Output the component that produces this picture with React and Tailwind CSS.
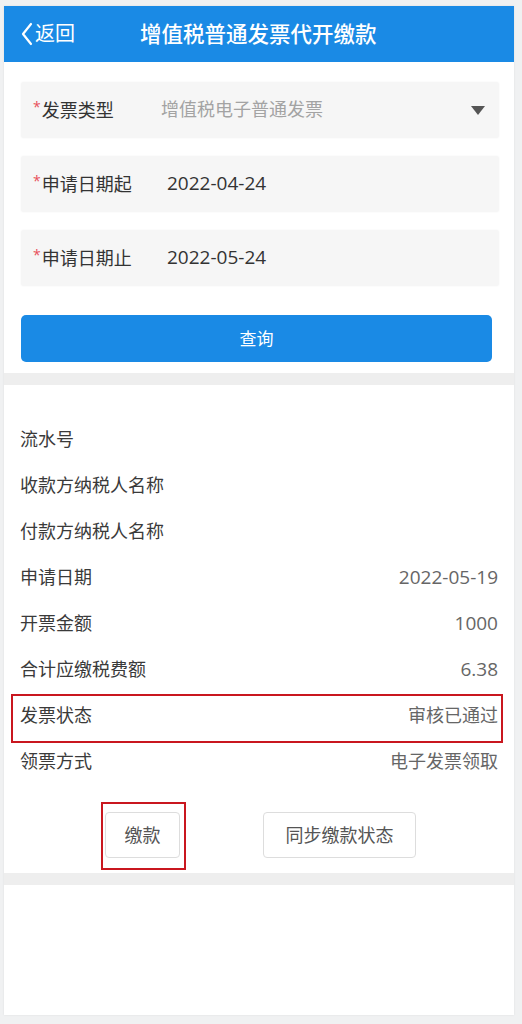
import React from "react";

const FONT = { fontFamily: '"Open Sans", "Noto Sans CJK SC", sans-serif' };

function Field({ label, children, right }) {
  return (
    <div className="flex h-[56px] items-center rounded-[3px] bg-[#f6f6f6] pl-[12px] pr-[12px] shadow-[0_0_2px_rgba(0,0,0,0.06)]">
      <div className="flex w-[120px] items-start">
        <span className="mr-[1px] mt-[-1px] text-[14px] leading-none text-[#e8505b]">*</span>
        <span className="text-[18px] leading-none text-[#333]">{label}</span>
      </div>
      <div className="flex-1">{children}</div>
      {right}
    </div>
  );
}

function Row({ label, value, boxed, num }) {
  return (
    <div className="relative flex h-[46px] items-center justify-between px-4">
      <span className="text-[18px] leading-none text-[#3a3a3a]">{label}</span>
      <span className={num ? "text-[19px] leading-none text-[#666]" : "text-[18px] leading-none text-[#666]"}>{value}</span>
      {boxed && (
        <div className="pointer-events-none absolute left-[7px] right-[11px] top-[2px] bottom-[-5px] border-2 border-[#c9171f]" />
      )}
    </div>
  );
}

export default function App() {
  return (
    <div className="min-h-[1024px] w-[522px] bg-[#f0f1f2] pl-[4px] pr-[8px] pt-[6px] pb-[9px]" style={FONT}>
      <div className="flex h-[1009px] flex-col bg-white shadow-[0_0_2px_rgba(0,0,0,0.08)]">
        {/* Header */}
        <div className="flex h-[56px] items-center bg-[#1a8ae5] pl-[16px] text-white">
          <div className="flex items-center">
            <svg width="13" height="24" viewBox="0 0 13 24" className="mr-[2px]">
              <path d="M11 2 L3 12 L11 22" fill="none" stroke="white" strokeWidth="2.2" strokeLinecap="round" strokeLinejoin="round" />
            </svg>
            <span className="text-[20px] leading-none">返回</span>
          </div>
          <span className="ml-[65px] text-[21.5px] font-medium leading-none">增值税普通发票代开缴款</span>
        </div>

        {/* Form */}
        <div className="flex flex-col pl-[17px] pr-[15px] pt-[20px] pb-[11px]">
          <div className="flex flex-col gap-[18px]">
            <Field
              label="发票类型"
              right={
                <svg width="14" height="9" viewBox="0 0 14 9" className="mr-[2px]">
                  <path d="M0 0 H14 L7 9 Z" fill="#555" />
                </svg>
              }
            >
              <span className="pl-[8px] text-[18px] leading-none text-[#a3a3a3]">增值税电子普通发票</span>
            </Field>
            <Field label="申请日期起">
              <span className="pl-[14px] text-[19px] leading-none text-[#333]">2022-04-24</span>
            </Field>
            <Field label="申请日期止">
              <span className="pl-[14px] text-[19px] leading-none text-[#333]">2022-05-24</span>
            </Field>
          </div>
          <button className="mt-[29px] flex h-[47px] w-[471px] items-center justify-center rounded-[5px] bg-[#1a8ae5] text-[17px] text-white">
            查询
          </button>
        </div>

        <div className="h-[12px] bg-[#eeeeee]" />

        {/* List */}
        <div className="flex flex-col pt-[31px]">
          <Row label="流水号" value="" />
          <Row label="收款方纳税人名称" value="" />
          <Row label="付款方纳税人名称" value="" />
          <Row label="申请日期" value="2022-05-19" num />
          <Row label="开票金额" value="1000" num />
          <Row label="合计应缴税费额" value="6.38" num />
          <Row label="发票状态" value="审核已通过" boxed />
          <Row label="领票方式" value="电子发票领取" />
        </div>

        {/* Buttons */}
        <div className="flex justify-center gap-[83px] pt-[28px] pb-[15px] pl-[3px]">
          <div className="relative">
            <button className="flex h-[46px] w-[75px] items-center justify-center rounded-[4px] border border-[#dddddd] bg-white text-[18px] text-[#555]">
              缴款
            </button>
            <div className="pointer-events-none absolute left-[-4px] right-[-6px] top-[-10px] bottom-[-12px] border-2 border-[#c9171f]" />
          </div>
          <button className="flex h-[46px] w-[153px] items-center justify-center rounded-[4px] border border-[#dddddd] bg-white text-[18px] text-[#555]">
            同步缴款状态
          </button>
        </div>

        <div className="h-[12px] bg-[#eeeeee]" />
        <div className="flex-1 bg-white" />
      </div>
    </div>
  );
}
